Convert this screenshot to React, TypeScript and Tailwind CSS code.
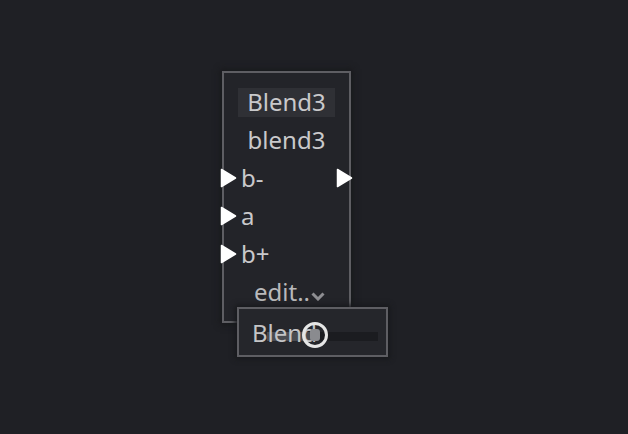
import React from 'react';

function Port({ side }: { side: 'left' | 'right' }) {
  return (
    <svg
      width="17"
      height="20"
      viewBox="0 0 17 20"
      className={side === 'left' ? 'absolute left-[-4px] top-1/2 -translate-y-1/2' : 'absolute right-[-4px] top-1/2 -translate-y-1/2'}
    >
      <path d="M1.5 1.5 L15.5 10 L1.5 18.5 Z" fill="#ffffff" stroke="#ffffff" strokeWidth="1.5" strokeLinejoin="round" />
    </svg>
  );
}

function Row({ children, left, right }: { children: React.ReactNode; left?: boolean; right?: boolean }) {
  return (
    <div className="relative h-[38px] flex items-center pl-[17px]">
      {left && <Port side="left" />}
      <span>{children}</span>
      {right && <Port side="right" />}
    </div>
  );
}

export default function App() {
  return (
    <div
      className="relative w-[628px] h-[434px] bg-[#1f2025] overflow-hidden text-[#c9c9cb] text-[24px] leading-none"
      style={{ fontFamily: '"Noto Sans", "DejaVu Sans", sans-serif' }}
    >
      {/* graph node */}
      <div className="absolute left-[222px] top-[71px] w-[129px] h-[252px] border-2 border-[#5e5e63] bg-[#232429] shadow-[0_0_6px_2px_#18191c]">
        <div className="flex flex-col pt-[10px]">
          <div className="h-[38px] flex items-center justify-center">
            <div className="w-[97px] h-[29px] bg-[#2f3035] flex items-center justify-center">Blend3</div>
          </div>
          <div className="h-[38px] flex items-center justify-center">blend3</div>
          <Row left right>b-</Row>
          <Row left>a</Row>
          <Row left>b+</Row>
          <div className="h-[38px] flex items-center pl-[30px] text-[#b9b9bb]">
            <span>edit..</span>
            <svg width="14" height="9" viewBox="0 0 14 9" className="ml-[1px] mt-[8px]">
              <path d="M1.5 1.5 L7 7 L12.5 1.5" fill="none" stroke="#8e8e92" strokeWidth="3" />
            </svg>
          </div>
        </div>
      </div>

      {/* popup slider */}
      <div className="absolute left-[237px] top-[307px] w-[151px] h-[50px] border-2 border-[#5e5e63] bg-[#25262b] shadow-[0_0_5px_2px_#18191c] flex items-center pl-[13px]">
        <div className="absolute left-[66px] right-[8px] top-[23px] h-[9px] bg-[#1b1c20]" />
        <div className="absolute left-[28px] w-[50px] top-[23px] h-[9px] bg-[#4a4b50]" />
        <span className="relative mt-[2px] text-[#c4c4c6]">Blend</span>
        <div className="absolute left-[63px] top-[13px] w-[26px] h-[26px] rounded-full border-[3px] border-[#e6e6e6] flex items-center justify-center">
          <div className="w-[10px] h-[12px] rounded-[3px] bg-[#8a8b8f]" />
        </div>
      </div>
    </div>
  );
}
